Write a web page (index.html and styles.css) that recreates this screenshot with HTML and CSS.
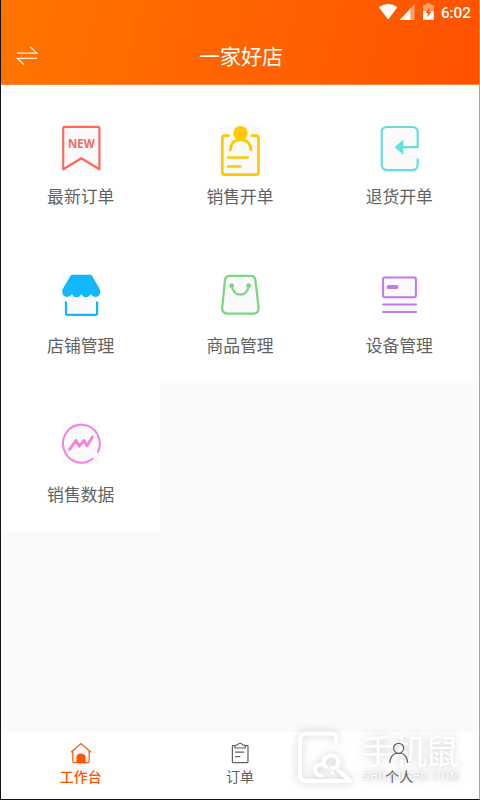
FILE: index.html
```
<!DOCTYPE html>
<html lang="zh-CN">
<head>
<meta charset="utf-8">
<title>一家好店</title>
<link rel="stylesheet" href="styles.css">
</head>
<body>
<div class="app">
  <header class="header">
    <div class="status">
      <svg class="status-icons" viewBox="379 3 58 20">
        <path class="solid" d="M379.8 8.3Q389.3 1.6 398.4 8.3L389.2 20.5Z"/>
        <path class="faint" d="M411.5 9.5L415.6 5V21H411.5Z"/>
        <path class="solid" d="M400.5 21L411.5 9.5V21Z"/>
        <path class="faint" d="M424 6H427V4.5H431.7V6H434.8V12H424Z"/>
        <path class="solid" d="M424 12H434.8V20.8H424Z"/>
        <path class="bolt" d="M431 8L426.5 14H429L428 18.5L432.5 12.5H430Z"/>
      </svg>
      <span>6:02</span>
    </div>
    <div class="titlebar">
      <svg class="swap" viewBox="16 46 22 20"><path d="M17 53.1H36.7L30 46.7M37 58.3H17.3L24 64.7"/></svg>
      <h1>一家好店</h1>
    </div>
  </header>

  <main class="grid">
    <div class="cell">
      <svg class="icon red" viewBox="50.7 120 60 60">
        <path class="tint" d="M62 126H100V171H62Z"/>
        <path d="M62.9 169.3V128.5Q62.9 126.9 64.5 126.9H97.5Q99.1 126.9 99.1 128.5V169.3L81 158.3Z"/>
        <text x="67.8" y="147.9" textLength="26.5" lengthAdjust="spacingAndGlyphs">NEW</text>
      </svg>
      <span>最新订单</span>
    </div>
    <div class="cell">
      <svg class="icon yellow" viewBox="210 120 60 60">
        <path class="tint" d="M221 126H260V176H221Z"/>
        <path d="M228.7 135.7H225Q222.3 135.7 222.3 138.4V172Q222.3 174.7 225 174.7H255.8Q258.5 174.7 258.5 172V138.4Q258.5 135.7 255.8 135.7H252M230.3 150Q231 139.8 240.6 139.8T251 150M228.3 157.5H247.8M228.3 166.5H240.3"/>
        <circle class="fill" cx="240.5" cy="133.2" r="7.2"/>
      </svg>
      <span>销售开单</span>
    </div>
    <div class="cell">
      <svg class="icon teal" viewBox="369.3 120 60 60">
        <path class="tint" d="M382 127H418V170H382Z"/>
        <path d="M403 147.2H418V132.5Q418 127 412.5 127H387.5Q382 127 382 132.5V164.5Q382 170 387.5 170H412.5Q418 170 418 164.5V158.5"/>
        <path class="fill" d="M394.8 147.2L403.6 139.5V154.8Z"/>
      </svg>
      <span>退货开单</span>
    </div>
    <div class="cell">
      <svg class="icon blue" viewBox="50.7 269 60 60">
        <path class="tint" d="M62 275H100V316H62Z"/>
        <path class="fill" d="M72.3 274.8H89.7Q91.2 274.8 92.1 276.2L99.6 289.5Q101 295 96.6 296.8Q92.5 297.4 90.6 294.3Q88.4 297.3 85.8 297.3Q82.8 297.3 81 294.3Q79.2 297.3 76.4 297.3Q73.2 297.3 71.4 294.3Q69.4 297.4 65.3 296.8Q61 295 62.2 289.5L69.9 276.2Q70.8 274.8 72.3 274.8Z"/>
        <path d="M65.7 302.3V313.3Q65.7 314.8 67.2 314.8H95.3Q96.8 314.8 96.8 313.3V302.3"/>
      </svg>
      <span>店铺管理</span>
    </div>
    <div class="cell">
      <svg class="icon green" viewBox="210 269 60 60">
        <path class="tint" d="M222 276H259V314H222Z"/>
        <path d="M230 275.9H250.8Q254.8 275.9 255.4 280L258.6 307.5Q258.9 313.6 253.3 313.6H227.5Q221.8 313.6 222.2 307.5L225 280Q225.7 275.9 230 275.9ZM231.7 286Q233.5 294.7 240.3 294.7T248.8 286"/>
        <circle class="fill" cx="231.6" cy="285.6" r="2.4"/><circle class="fill" cx="248.7" cy="285.6" r="2.4"/>
      </svg>
      <span>商品管理</span>
    </div>
    <div class="cell">
      <svg class="icon purple" viewBox="369.3 269 60 60">
        <path class="tint" d="M382 276H418V313H382Z"/>
        <rect x="383.4" y="277.6" width="32.8" height="19.6" rx="1.6"/>
        <path d="M383.4 304.4H416.4M383.4 312H416.4"/><path class="thick" d="M388.8 287H396.8"/>
      </svg>
      <span>设备管理</span>
    </div>
    <div class="cell">
      <svg class="icon pink" viewBox="50.7 418 60 60">
        <path class="tint" d="M62 424H100V464H62Z"/>
        <path d="M92.3 458.7A18.4 19 0 1 1 97.7 451.8"/>
        <path class="zig" d="M69.3 449.4L75.7 440.4L79 446.2L83.6 440.4L86.7 445.7L92.1 437"/>
      </svg>
      <span>销售数据</span>
    </div>
  </main>

  <nav class="tabs">
    <svg class="watermark" viewBox="288 722 180 72">
      <path d="M335 741.5V738Q335 733.5 330.5 733.5H306Q299 733.5 299 740V775Q299 781 305 781H349.5L337.5 770.5M320.5 775.5C311.5 775.5 312 763.5 320.5 764.5Q323.5 764.8 325 767M323 764C321 754.5 335 752.5 337.2 760.5C338.5 766 334 769 330.5 768"/>
      <circle cx="331.5" cy="773" r="1.8"/>
      <text class="mark-name" x="360" y="763.5" textLength="98">手机鼠</text>
      <text class="mark-url" x="361.5" y="780.3" textLength="96">SHOUJISHU.COM</text>
    </svg>
    <div class="tab active">
      <svg viewBox="69 741 24 24"><path d="M71 752.2L81 743.5L91 752.2M72.8 750.8V761.2Q72.8 762.6 74.2 762.6H87.8Q89.2 762.6 89.2 761.2V750.8"/><path class="door" d="M77 762.6V757Q77.3 754 81 754T85 757V762.6Z"/></svg>
      <span>工作台</span>
    </div>
    <div class="tab">
      <svg viewBox="228.3 741 24 24"><path d="M235.3 745.6H233.5Q232.7 745.6 232.7 746.4V761.8Q232.7 762.6 233.5 762.6H247.5Q248.3 762.6 248.3 761.8V746.4Q248.3 745.6 247.5 745.6H245.5M235.3 748V745.8Q235.4 744.8 237.5 744.8Q240.5 741.8 243.3 744.8Q245.5 744.8 245.5 745.8V748ZM235.5 752.2H244.5M235.5 756.7H240.5"/></svg>
      <span>订单</span>
    </div>
    <div class="tab">
      <svg viewBox="387.7 741 24 24"><circle cx="399.3" cy="748.3" r="5"/><path d="M390.4 763C390.7 757.5 393.8 753.5 397 753.5H402C405 753.5 408.2 757.5 408.5 763"/></svg>
      <span>个人</span>
    </div>
  </nav>
</div>
</body>
</html>
```
FILE: styles.css
```
* { box-sizing: border-box; }
body { margin: 0; font-family: "Noto Sans CJK SC", sans-serif; }
.app {
  display: flex;
  flex-direction: column;
  width: 480px;
  height: 800px;
  overflow: hidden;
  background: #fafafa;
  border-left: 1px solid #15131a;
  border-right: 1px solid #a5a5a5;
  border-bottom: 1px solid #151018;
}
svg { display: block; fill: none; stroke: currentColor; }
.header {
  height: 85px;
  color: #fff;
  background: linear-gradient(105deg, #ff7500, #ff5200);
  border-bottom: 1px solid #ff8840;
}
.status {
  display: flex;
  justify-content: flex-end;
  align-items: center;
  height: 26px;
  padding-right: 8px;
  gap: 5px;
  font: 500 15.3px/26px Roboto, sans-serif;
}
.status-icons { width: 58px; height: 20px; margin-top: -2px; stroke: none; }
.solid { fill: #fff; }
.faint { fill: #ffa06c; }
.bolt { fill: #ff5b00; }
.titlebar {
  display: grid;
  grid-template-columns: 60px 1fr 58px;
  align-items: center;
  height: 58px;
}
.swap { width: 22px; height: 20px; margin: 2px 0 0 15px; stroke-width: 1.2; opacity: .9; }
h1 { margin: 0; font-size: 21px; line-height: 30px; font-weight: 400; text-align: center; }
.grid {
  flex: 1;
  display: grid;
  grid-template-columns: repeat(3, 1fr);
  grid-auto-rows: 149px;
  align-content: start;
}
.cell {
  display: flex;
  flex-direction: column;
  align-items: center;
  padding-top: 35px;
  background: #fff;
  color: #626262;
  font-size: 16.8px;
  line-height: 24px;
}
.cell span { margin-top: 4px; }
.icon { width: 60px; height: 60px; stroke-width: 2.2; stroke-linecap: round; stroke-linejoin: round; }
.icon .tint { fill: #fafafa; stroke: none; }
.icon .fill { fill: currentColor; stroke: none; }
.icon text { fill: currentColor; stroke: none; font: 700 13px "Open Sans", sans-serif; }
.red { color: #ff6859; }
.yellow { color: #ffc900; stroke-width: 2.7; }
.teal { color: #65dfda; stroke-linecap: butt; }
.blue { color: #13b8fb; }
.green { color: #78d780; }
.purple { color: #c278f5; stroke-width: 2; }
.thick { stroke-width: 3.8; }
.pink { color: #f580df; stroke-width: 2; }
.zig { stroke-width: 2.8; }
.tabs {
  position: relative;
  display: grid;
  grid-template-columns: repeat(3, 1fr);
  height: 67px;
  background: #fff;
}
.tab {
  position: relative;
  display: flex;
  flex-direction: column;
  align-items: center;
  padding-top: 9px;
  color: #606060;
  font-size: 14px;
  line-height: 20px;
}
.tab svg { width: 24px; height: 24px; stroke-width: 1.2; }
.tab span { margin-top: 1px; }
.tab.active { color: #ff5500; }
.active span { font-weight: 500; }
.door { fill: currentColor; }
.watermark {
  position: absolute;
  left: 288px;
  top: -10px;
  width: 180px;
  height: 72px;
  color: #fff;
  stroke-width: 4;
  stroke-linejoin: round;
  stroke-linecap: round;
  filter: drop-shadow(0 0 4px rgba(0, 0, 0, .2));
}
.watermark text, .watermark circle { fill: currentColor; stroke: none; }
.mark-name { font-size: 34px; }
.mark-url { font: 10px "Liberation Sans", sans-serif; filter: drop-shadow(0 0 1px rgba(0, 0, 0, .25)); }
```
